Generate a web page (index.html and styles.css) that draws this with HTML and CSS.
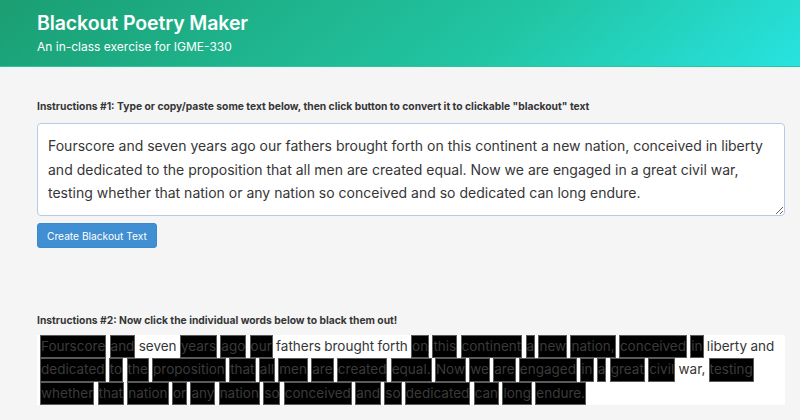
FILE: index.html
```html
<!DOCTYPE html>
<html lang="en">
<head>
<meta charset="utf-8">
<title>Blackout Poetry Maker</title>
<link rel="stylesheet" href="styles.css">
</head>
<body>
<header class="hero">
  <h1 class="title">Blackout Poetry Maker</h1>
  <p class="subtitle">An in-class exercise for IGME-330</p>
</header>
<main class="section">
  <label class="label" for="input">Instructions #1: Type or copy/paste some text below, then click button to convert it to clickable "blackout" text</label>
  <textarea id="input" class="textarea">Fourscore and seven years ago our fathers brought forth on this continent a new nation, conceived in liberty and dedicated to the proposition that all men are created equal. Now we are engaged in a great civil war, testing whether that nation or any nation so conceived and so dedicated can long endure.</textarea>
  <button class="button">Create Blackout Text</button>
  <p class="label label-2">Instructions #2: Now click the individual words below to black them out!</p>
  <div class="output"><span class="w b">Fourscore</span> <span class="w b">and</span> <span class="w">seven</span> <span class="w b">years</span> <span class="w b">ago</span> <span class="w b">our</span> <span class="w">fathers</span> <span class="w">brought</span> <span class="w">forth</span> <span class="w b">on</span> <span class="w b">this</span> <span class="w b">continent</span> <span class="w b">a</span> <span class="w b">new</span> <span class="w b">nation,</span> <span class="w b">conceived</span> <span class="w b">in</span> <span class="w">liberty</span> <span class="w">and</span> <span class="w b">dedicated</span> <span class="w b">to</span> <span class="w b">the</span> <span class="w b">proposition</span> <span class="w b">that</span> <span class="w b">all</span> <span class="w b">men</span> <span class="w b">are</span> <span class="w b">created</span> <span class="w b">equal.</span> <span class="w b">Now</span> <span class="w b">we</span> <span class="w b">are</span> <span class="w b">engaged</span> <span class="w b">in</span> <span class="w b">a</span> <span class="w b">great</span> <span class="w b">civil</span> <span class="w">war,</span> <span class="w b">testing</span> <span class="w b">whether</span> <span class="w b">that</span> <span class="w b">nation</span> <span class="w b">or</span> <span class="w b">any</span> <span class="w b">nation</span> <span class="w b">so</span> <span class="w b">conceived</span> <span class="w b">and</span> <span class="w b">so</span> <span class="w b">dedicated</span> <span class="w b">can</span> <span class="w b">long</span> <span class="w b">endure.</span></div>
</main>
</body>
</html>
```

FILE: styles.css
```css
* { box-sizing: border-box; }
html, body { margin: 0; padding: 0; }
body {
  background: #f5f5f5;
  font-family: Inter, "Noto Sans", sans-serif;
  color: #363636;
  width: 800px;
  height: 420px;
  overflow: hidden;
}
.hero {
  height: 67px;
  padding: 11px 37px 0;
  background-image: linear-gradient(141deg, #1b9e72 0%, #21c5a3 62%, #27e3e0 100%);
  border-bottom: 1px solid #2cc49a;
  color: #fff;
}
.title {
  margin: 0;
  font-size: 19.5px;
  font-weight: 600;
  line-height: 24px;
  letter-spacing: -0.1px;
}
.subtitle {
  margin: 3px 0 0;
  font-size: 12px;
  line-height: 18px;
}
.section {
  padding: 32px 15px 0 37px;
  display: flex;
  flex-direction: column;
  align-items: flex-start;
}
.label {
  display: block;
  font-size: 10.3px;
  font-weight: 700;
  line-height: 14px;
  color: #363636;
  margin: 0 0 10px;
}
.textarea {
  display: block;
  width: 748px;
  height: 93px;
  padding: 10px 10px;
  font-family: inherit;
  font-size: 14px;
  line-height: 23.5px;
  color: #363636;
  background: #fff;
  border: 1px solid #b7cbe8;
  border-radius: 4px;
  resize: vertical;
  outline: none;
}
.button {
  margin-top: 7px;
  height: 25px;
  padding: 0 9px;
  font-family: inherit;
  font-size: 10.2px;
  color: #fff;
  background: #3f8fd2;
  border: 1px solid #3a89cc;
  border-radius: 3px;
}
.label-2 {
  margin-top: 65px;
  margin-bottom: 8px;
}
.output {
  width: 748px;
  background: #fff;
  padding: 0 3px;
  font-size: 13.5px;
  line-height: 23.33px;
  word-spacing: -0.5px;
  color: #363636;
}
.w {
  display: inline-block;
  height: 23.33px;
  line-height: 23.33px;
  vertical-align: top;
  word-spacing: normal;
}
.w.b {
  line-height: 21.33px;
  background: #000;
  color: #3b3b3b;
  border: 1px solid #5a5a5a;
}
```
